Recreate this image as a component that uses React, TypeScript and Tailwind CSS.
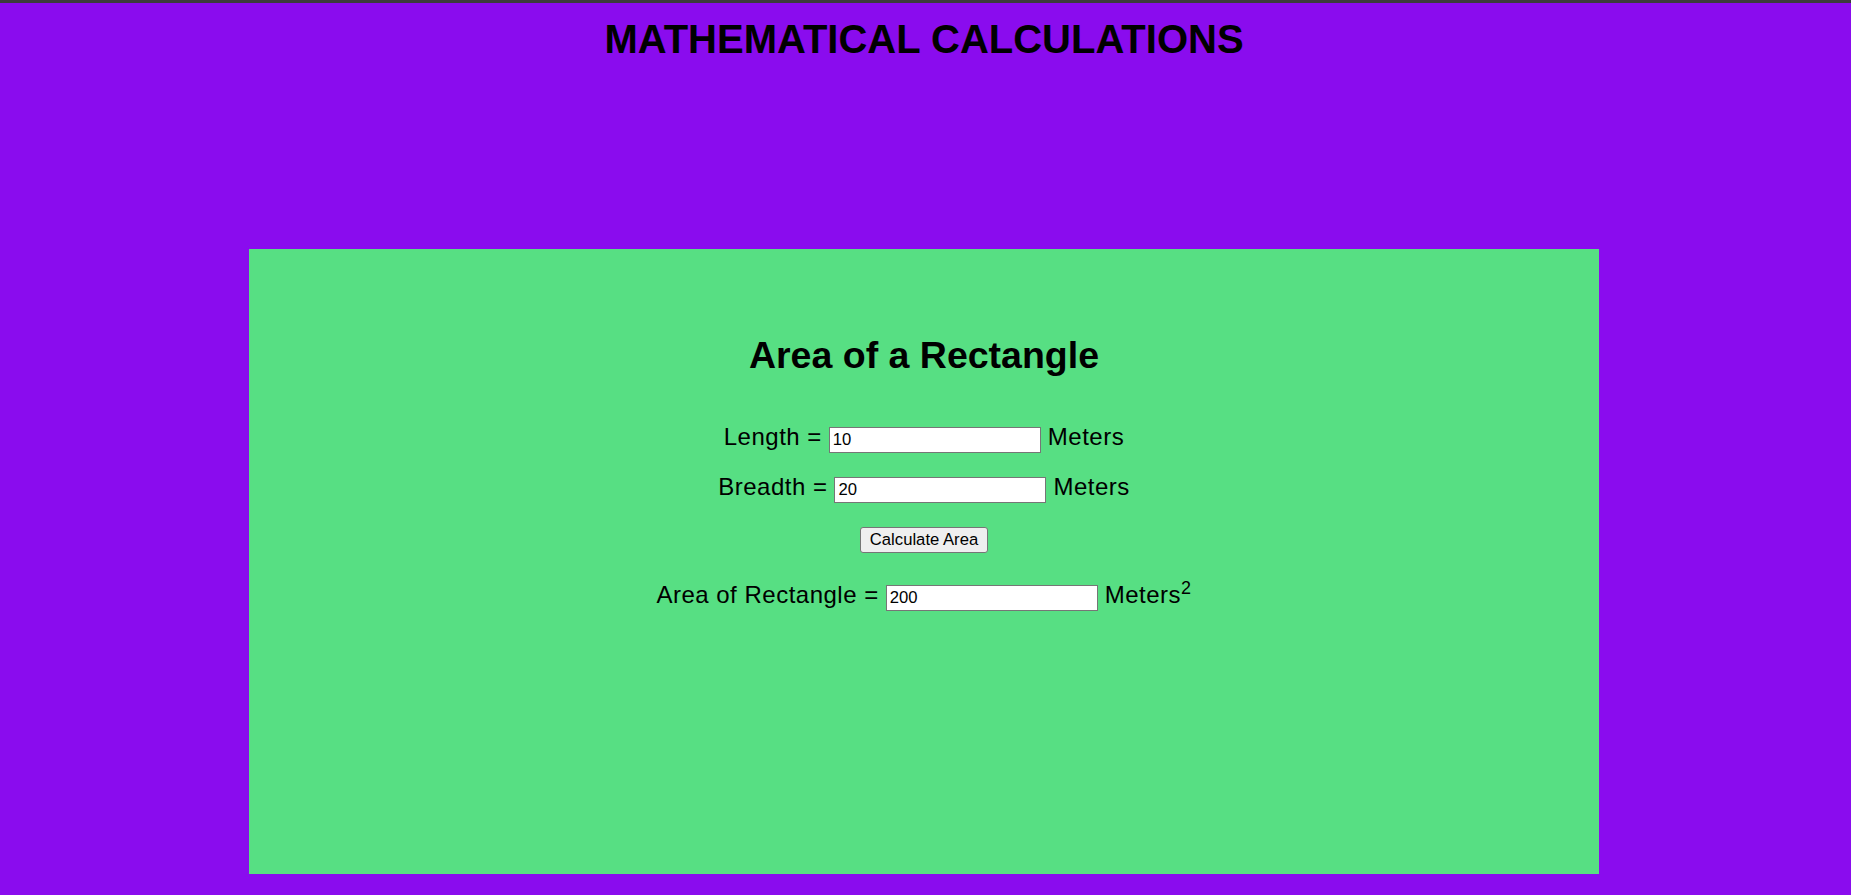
import React, { useState } from "react";

export default function App() {
  const [length, setLength] = useState("10");
  const [breadth, setBreadth] = useState("20");
  const [area, setArea] = useState("200");

  const calc = () => {
    const l = parseFloat(length);
    const b = parseFloat(breadth);
    setArea(String(l * b));
  };

  const inputCls =
    "w-[212px] h-[26px] bg-white border border-[#767676] px-[3px] text-[16.67px] leading-[20px] tracking-normal text-black outline-none";

  return (
    <div
      className="min-h-screen w-full bg-[#8a0cee] text-black"
      style={{ fontFamily: '"Liberation Sans", Arial, sans-serif' }}
    >
      <div className="h-[3px] w-full bg-[#3c3c3c]" />
      <div className="w-[1848px] flex flex-col items-center">
        <h1 className="mt-[13px] text-[40px] leading-[46px] font-bold text-center">
          MATHEMATICAL CALCULATIONS
        </h1>
        <div className="mt-[187px] w-[1350px] h-[625px] bg-[#57df83] flex flex-col items-center pt-[85px]">
          <h2 className="text-[37.5px] leading-[43px] font-bold">Area of a Rectangle</h2>

          <div className="mt-[47px] flex items-baseline gap-[7px] text-[24px] leading-[26px] tracking-[0.5px]">
            <span>Length =</span>
            <input
              className={inputCls}
              value={length}
              onChange={(e) => setLength(e.target.value)}
            />
            <span>Meters</span>
          </div>

          <div className="mt-[21px] flex items-baseline gap-[7px] text-[24px] leading-[26px] tracking-[0.5px]">
            <span>Breadth =</span>
            <input
              className={inputCls}
              value={breadth}
              onChange={(e) => setBreadth(e.target.value)}
            />
            <span>Meters</span>
          </div>

          <button
            onClick={calc}
            className="mt-[24px] h-[26px] px-[9px] bg-[#efefef] border border-[#767676] rounded-[3px] text-[16.67px] leading-[20px] text-black"
          >
            Calculate Area
          </button>

          <div className="mt-[29px] flex items-baseline gap-[7px] text-[24px] leading-[26px] tracking-[0.5px]">
            <span>Area of Rectangle =</span>
            <input
              className={inputCls}
              value={area}
              readOnly
            />
            <span>
              Meters<sup>2</sup>
            </span>
          </div>
        </div>
      </div>
    </div>
  );
}
